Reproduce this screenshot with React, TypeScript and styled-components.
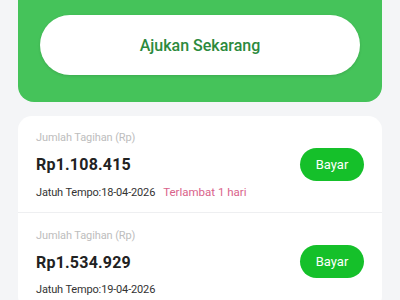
import React from "react";
import styled, { createGlobalStyle } from "styled-components";

const GlobalStyle = createGlobalStyle`
  body {
    margin: 0;
    background: #f4f5f7;
    font-family: Roboto, "Liberation Sans", sans-serif;
  }
`;

const bills = [
  { amount: "Rp1.108.415", due: "18-04-2026", late: "Terlambat 1 hari" },
  { amount: "Rp1.534.929", due: "19-04-2026", late: "" },
];

const App = () => {
  return (
    <>
      <GlobalStyle />
      <Page>
        <Hero>
          <ApplyButton>Ajukan Sekarang</ApplyButton>
        </Hero>
        <BillCard>
          {bills.map((bill, i) => (
            <BillRow key={bill.amount} last={i === bills.length - 1}>
              <BillInfo>
                <Label>Jumlah Tagihan (Rp)</Label>
                <Amount>{bill.amount}</Amount>
                <DueLine>
                  <Due>Jatuh Tempo:{bill.due}</Due>
                  {bill.late && <Late>{bill.late}</Late>}
                </DueLine>
              </BillInfo>
              <PayButton>Bayar</PayButton>
            </BillRow>
          ))}
        </BillCard>
      </Page>
    </>
  );
};

export default App;

const Page = styled.div`
  width: 400px;
  height: 300px;
  overflow: hidden;
  padding: 0 18px;
  box-sizing: border-box;
  display: flex;
  flex-direction: column;
  gap: 14px;
`;

const Hero = styled.div`
  background: #45c35a;
  border-radius: 0 0 16px 16px;
  padding: 16px 22px 27px;
  margin-top: -1px;
`;

const ApplyButton = styled.div`
  height: 60px;
  border-radius: 30px;
  background: #fff;
  box-shadow: 0 1px 3px rgba(0, 0, 0, 0.12);
  display: flex;
  align-items: center;
  justify-content: center;
  color: #2c8a3d;
  font-size: 16px;
  font-weight: 500;
`;

const BillCard = styled.div`
  background: #fff;
  border-radius: 14px;
  flex-shrink: 0;
`;

const BillRow = styled.div<{ last?: boolean }>`
  display: flex;
  align-items: center;
  justify-content: space-between;
  padding: 13px 18px 13px 18px;
  height: 97px;
  box-sizing: border-box;
  border-bottom: ${(p) => (p.last ? "none" : "1px solid #eeeff1")};
`;

const BillInfo = styled.div`
  display: flex;
  flex-direction: column;
`;

const Label = styled.div`
  font-size: 11px;
  color: #bdbdbd;
  line-height: 16px;
  letter-spacing: -0.1px;
`;

const Amount = styled.div`
  font-size: 16px;
  font-weight: 700;
  color: #222;
  line-height: 22px;
  margin-top: 8px;
  letter-spacing: 0.2px;
`;

const DueLine = styled.div`
  display: flex;
  align-items: baseline;
  gap: 8px;
  margin-top: 9px;
`;

const Due = styled.span`
  font-size: 11px;
  color: #333;
  letter-spacing: -0.15px;
`;

const Late = styled.span`
  font-size: 11.5px;
  color: #d9628a;
`;

const PayButton = styled.div`
  width: 64px;
  height: 33px;
  border-radius: 17px;
  background: #15c02a;
  color: #fff;
  font-size: 13px;
  display: flex;
  align-items: center;
  justify-content: center;
`;
